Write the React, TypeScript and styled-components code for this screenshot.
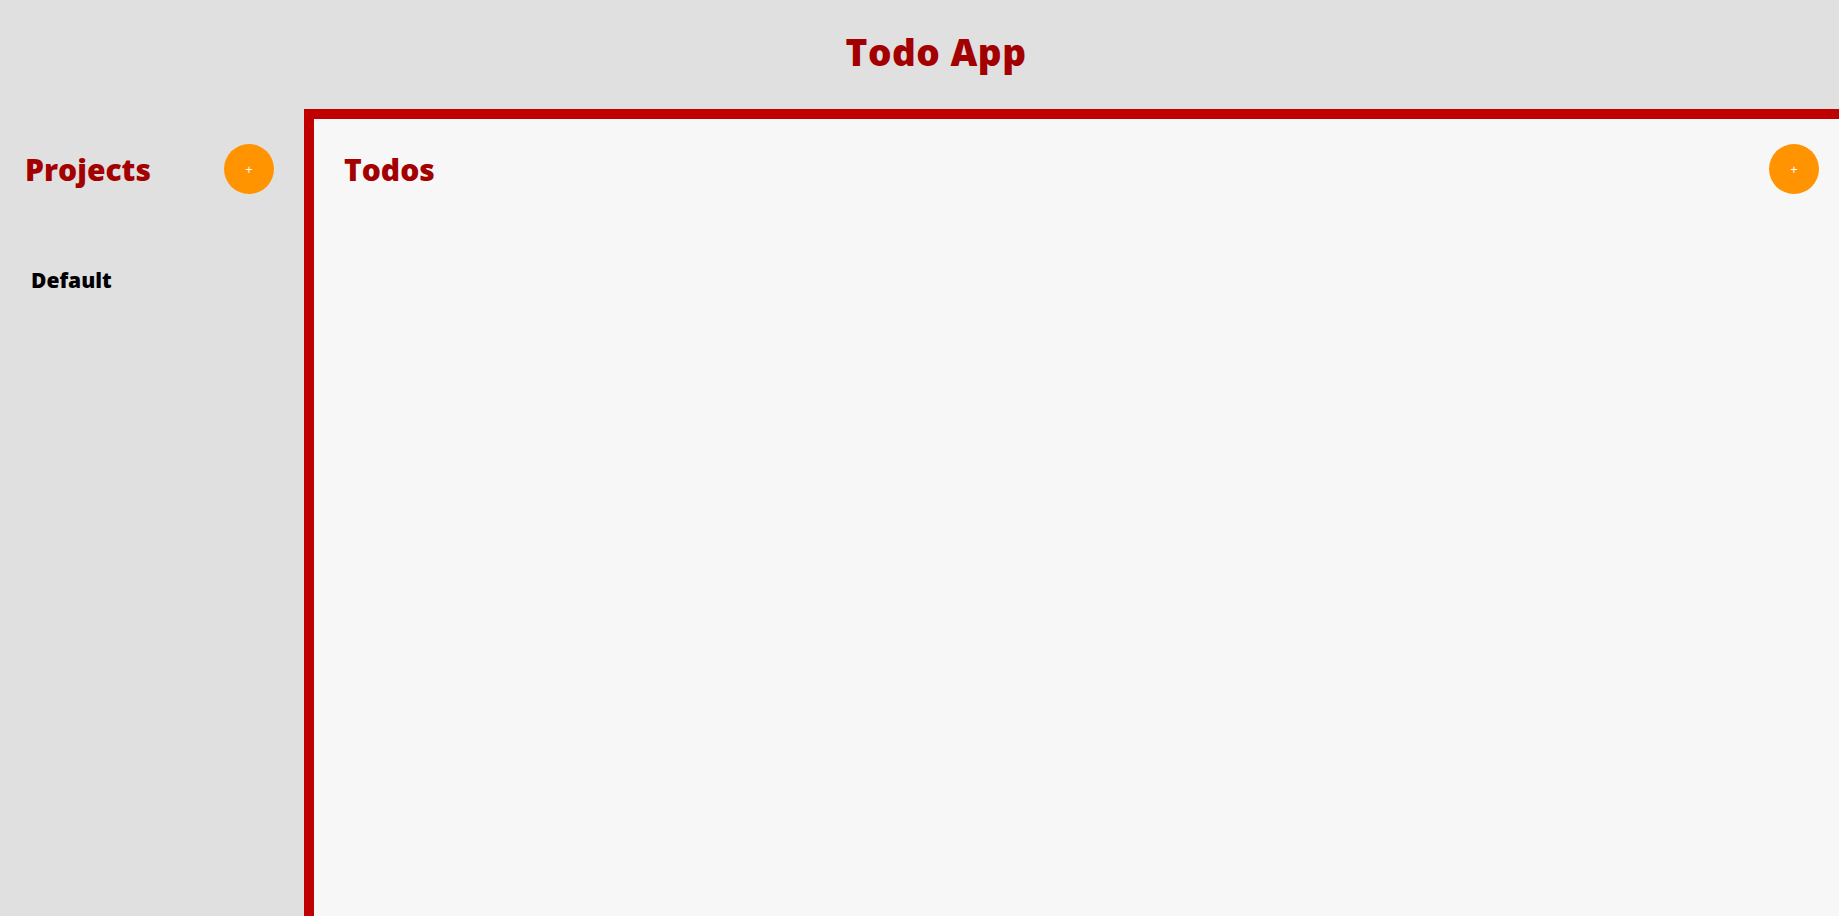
import styled, { createGlobalStyle } from "styled-components"

const GlobalStyle = createGlobalStyle`
html, body {
  margin: 0;
  padding: 0;
  background: #e0e0e0;
  font-family: "Open Sans", "Noto Sans", sans-serif;
  overflow: hidden;
}
`

const Page = styled.div`
height: 916px;
display: flex;
flex-direction: column;
`

const Header = styled.header`
height: 109px;
flex-shrink: 0;
display: flex;
align-items: center;
justify-content: center;
padding: 0 0 6px 33px;
box-sizing: border-box;
`

const Title = styled.h1`
margin: 0;
font-size: 37px;
font-weight: 800;
color: #a30000;
letter-spacing: 0.5px;
`

const Body = styled.div`
flex: 1;
display: flex;
min-height: 0;
`

const Sidebar = styled.aside`
width: 304px;
flex-shrink: 0;
box-sizing: border-box;
padding: 35px 30px 0 25px;
`

const Main = styled.main`
flex: 1;
background: #f7f7f7;
border-top: 10px solid #c00000;
border-left: 10px solid #c00000;
padding: 25px 20px 0 30px;
`

const SectionHead = styled.div`
display: flex;
align-items: center;
justify-content: space-between;
height: 50px;
`

const SectionTitle = styled.h2`
margin: 0;
font-size: 30px;
font-weight: 800;
color: #a30000;
`

const AddButton = styled.button`
width: 50px;
height: 50px;
border-radius: 50%;
border: none;
background: #ff9400;
color: white;
font-size: 13px;
font-family: "Open Sans", sans-serif;
padding: 0;
cursor: pointer;
`

const ProjectList = styled.ul`
list-style: none;
margin: 72px 0 0;
padding: 0 0 0 6px;
`

const ProjectItem = styled.li`
font-size: 21px;
font-weight: 800;
color: #000;
`

export default function App() {
  return (
    <Page>
      <GlobalStyle />
      <Header>
        <Title>Todo App</Title>
      </Header>
      <Body>
        <Sidebar>
          <SectionHead>
            <SectionTitle>Projects</SectionTitle>
            <AddButton>+</AddButton>
          </SectionHead>
          <ProjectList>
            <ProjectItem>Default</ProjectItem>
          </ProjectList>
        </Sidebar>
        <Main>
          <SectionHead>
            <SectionTitle>Todos</SectionTitle>
            <AddButton>+</AddButton>
          </SectionHead>
        </Main>
      </Body>
    </Page>
  )
}
